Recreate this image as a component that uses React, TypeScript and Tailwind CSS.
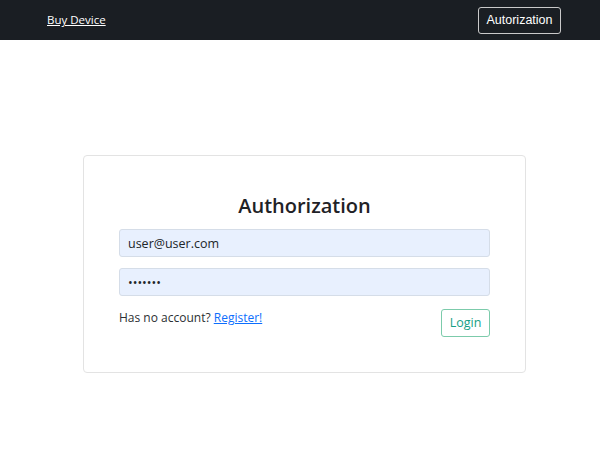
import React, { useState } from "react";

function NavBar() {
  return (
    <div className="flex h-10 items-center justify-between bg-[#1a1e23] pl-[47px] pr-[39px]">
      <a
        href="#"
        className="text-[11.5px] text-white underline"
        style={{ fontFamily: "'Open Sans', 'Noto Sans', sans-serif" }}
      >
        Buy Device
      </a>
      <button
        className="flex h-[27px] w-[83px] items-center justify-center rounded-[3px] border border-[#c9c9c9] text-[12.5px] text-white"
        style={{ fontFamily: "'Liberation Sans', Arial, sans-serif" }}
      >
        Autorization
      </button>
    </div>
  );
}

function App() {
  const [email, setEmail] = useState("user@user.com");
  const [password, setPassword] = useState("1234567");

  return (
    <div
      className="min-h-[466px] w-[600px] bg-white text-[#212529]"
      style={{ fontFamily: "'Open Sans', 'Noto Sans', sans-serif" }}
    >
      <NavBar />
      <div className="flex pl-[83px] pt-[115px]">
        <div className="flex h-[218px] w-[443px] flex-col rounded-[4px] border border-[#e3e3e3] px-[35px] pt-[36px]">
          <h2 className="text-center text-[20px] font-semibold leading-[28px] text-[#1f2226]">
            Authorization
          </h2>
          <input
            className="mt-[9px] h-[28px] w-full rounded-[3px] border border-[#d5dde8] bg-[#e8f0fe] px-[8px] text-[12.5px] text-[#212529] outline-none"
            value={email}
            onChange={(e) => setEmail(e.target.value)}
          />
          <input
            type="password"
            className="mt-[11px] h-[28px] w-full rounded-[3px] border border-[#d5dde8] bg-[#e8f0fe] px-[8px] text-[12.5px] text-[#212529] outline-none"
            value={password}
            onChange={(e) => setPassword(e.target.value)}
          />
          <div className="mt-[13px] flex items-start justify-between">
            <div className="text-[12px] leading-[18px] text-[#2b2f33]">
              Has no account?{" "}
              <a href="#" className="text-[#0d6efd] underline">
                Register!
              </a>
            </div>
            <button className="flex h-[28px] w-[49px] items-center justify-center rounded-[3px] border border-[#7ccbab] text-[12.5px] text-[#16a085]">
              Login
            </button>
          </div>
        </div>
      </div>
    </div>
  );
}

export default App;
